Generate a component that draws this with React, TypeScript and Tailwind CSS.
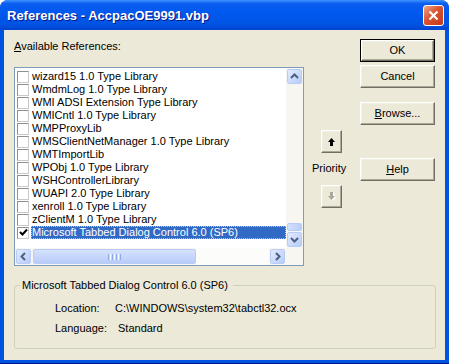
import React from "react";

const items = [
  "wizard15 1.0 Type Library",
  "WmdmLog 1.0 Type Library",
  "WMI ADSI Extension Type Library",
  "WMICntl 1.0 Type Library",
  "WMPProxyLib",
  "WMSClientNetManager 1.0 Type Library",
  "WMTImportLib",
  "WPObj 1.0 Type Library",
  "WSHControllerLibrary",
  "WUAPI 2.0 Type Library",
  "xenroll 1.0 Type Library",
  "zClientM 1.0 Type Library",
];

function Chevron({ dir }: { dir: "up" | "down" | "left" | "right" }) {
  const rot = { up: 0, right: 90, down: 180, left: 270 }[dir];
  return (
    <svg width="9" height="9" viewBox="0 0 9 9" style={{ transform: `rotate(${rot}deg)` }}>
      <path d="M1 6 L4.5 2.5 L8 6" fill="none" stroke="#4D6185" strokeWidth="2" />
    </svg>
  );
}

function ScrollBtn({ dir }: { dir: "up" | "down" | "left" | "right" }) {
  return (
    <div className="w-[17px] h-[17px] shrink-0 p-px">
      <div className="w-full h-full flex items-center justify-center rounded-[2px] border border-[#B9CCF7] bg-[linear-gradient(135deg,#E3EBFF,#B7CBF8)]">
        <Chevron dir={dir} />
      </div>
    </div>
  );
}

function Btn({
  children,
  def,
  className = "",
}: {
  children: React.ReactNode;
  def?: boolean;
  className?: string;
}) {
  const bevel =
    "flex-1 flex items-center justify-center border border-t-white border-l-white border-r-[#716F64] border-b-[#716F64] shadow-[inset_-1px_-1px_0_#ACA899,inset_1px_1px_0_#F1EFE2]";
  return (
    <div className={"flex bg-[#ECE9D8] " + (def ? "border border-black " : "") + className}>
      <div className={bevel}>{children}</div>
    </div>
  );
}

function CheckBox({ checked }: { checked?: boolean }) {
  return (
    <div className="w-[12px] h-[12px] shrink-0 ml-[2px] border border-t-[#8E8F8F] border-l-[#8E8F8F] border-r-[#C9C9C9] border-b-[#C9C9C9] bg-white flex items-center justify-center">
      {checked && (
        <svg width="9" height="9" viewBox="0 0 9 9">
          <path d="M1 4 L3.5 6.5 L8 1.5" fill="none" stroke="#000" strokeWidth="2" />
        </svg>
      )}
    </div>
  );
}

export default function App() {
  return (
    <div className="w-[449px] h-[364px] flex flex-col rounded-t-[8px] overflow-hidden bg-[#0053E1] border-b-[1px] border-[#00138C] font-['Liberation_Sans',Arial,sans-serif] text-[11px] leading-[13px] text-black">
      {/* title bar */}
      <div className="h-[30px] shrink-0 flex items-center pl-[7px] pr-[5px] bg-[linear-gradient(180deg,#3F93FF_0%,#0A5EF0_12%,#0058EE_45%,#0054E3_80%,#0045D0_100%)]">
        <span className="flex-1 text-white font-bold text-[13px] [text-shadow:1px_1px_#0A1883]">
          References - AccpacOE9991.vbp
        </span>
        <div className="w-[21px] h-[21px] rounded-[3px] border border-white bg-[linear-gradient(135deg,#F0A58A,#D9532E_45%,#C2391A)] flex items-center justify-center">
          <svg width="11" height="11" viewBox="0 0 11 11">
            <path d="M1.5 1.5 L9.5 9.5 M9.5 1.5 L1.5 9.5" stroke="#fff" strokeWidth="2.2" />
          </svg>
        </div>
      </div>

      {/* client */}
      <div className="flex-1 mx-[4px] mb-[3px] bg-[#ECE9D8] flex flex-col">
        <div className="flex">
          {/* left column */}
          <div className="ml-[10px] w-[290px] flex flex-col">
            <div className="mt-[10px] h-[13px]">
              <span className="underline">A</span>vailable References:
            </div>
            <div className="mt-[14px] h-[199px] border border-[#7F9DB9] bg-white flex flex-col">
              <div className="flex h-[180px]">
                <div className="w-[271px] pt-[2px] flex flex-col">
                  {items.map((t) => (
                    <div key={t} className="h-[13px] flex items-center">
                      <CheckBox />
                      <span className="ml-[2px] pl-[1px] whitespace-nowrap">{t}</span>
                    </div>
                  ))}
                  <div className="h-[13px] flex items-center">
                    <CheckBox checked />
                    <span className="ml-[2px] pl-[1px] flex-1 h-[13px] bg-[#316AC5] text-white whitespace-nowrap outline-1 outline-dotted outline-[#E8C46A] -outline-offset-1">
                      Microsoft Tabbed Dialog Control 6.0 (SP6)
                    </span>
                  </div>
                </div>
                {/* vertical scrollbar */}
                <div className="w-[17px] flex flex-col bg-[#F7F6F1]">
                  <ScrollBtn dir="up" />
                  <div className="flex-1" />
                  <div className="h-[8px] mx-px rounded-[2px] border border-[#B9CCF7] bg-[linear-gradient(90deg,#D3E0FE,#B9CDF8)]" />
                  <ScrollBtn dir="down" />
                </div>
              </div>
              {/* horizontal scrollbar */}
              <div className="flex h-[17px]">
                <div className="w-[271px] flex bg-[#F7F6F1]">
                  <ScrollBtn dir="left" />
                  <div className="w-[163px] my-px ml-px rounded-[2px] border border-[#B9CCF7] bg-[linear-gradient(180deg,#D6E2FE,#B8CCF8)] flex items-center justify-center gap-[1px]">
                    <div className="w-px h-[6px] bg-[#8CA9EE]" />
                    <div className="w-px h-[6px] bg-white" />
                    <div className="w-px h-[6px] bg-[#8CA9EE]" />
                    <div className="w-px h-[6px] bg-white" />
                    <div className="w-px h-[6px] bg-[#8CA9EE]" />
                    <div className="w-px h-[6px] bg-white" />
                    <div className="w-px h-[6px] bg-[#8CA9EE]" />
                  </div>
                  <div className="flex-1 bg-[#FCFCFA]" />
                  <ScrollBtn dir="right" />
                </div>
                <div className="w-[17px] bg-[#F7F6F1]" />
              </div>
            </div>
          </div>

          {/* priority column */}
          <div className="ml-[8px] w-[34px] flex flex-col">
            <Btn className="mt-[100px] ml-[9px] w-[21px] h-[23px]">
              <svg width="7" height="8" viewBox="0 0 7 8">
                <path d="M3.5 0 L7 4 L5 4 L5 8 L2 8 L2 4 L0 4 Z" fill="#000" />
              </svg>
            </Btn>
            <div className="mt-[9px] h-[13px]">Priority</div>
            <Btn className="mt-[10px] ml-[9px] w-[21px] h-[23px]">
              <svg width="8" height="9" viewBox="0 0 8 9">
                <path d="M4 8 L7.5 4 L5.5 4 L5.5 0 L2.5 0 L2.5 4 L0.5 4 Z" fill="#fff" transform="translate(1 1)" />
                <path d="M3.5 8 L7 4 L5 4 L5 0 L2 0 L2 4 L0 4 Z" fill="#ACA899" />
              </svg>
            </Btn>
          </div>

          {/* buttons column */}
          <div className="ml-[14px] w-[75px] flex flex-col">
            <Btn def className="mt-[9px] h-[23px]">OK</Btn>
            <Btn className="mt-[3px] h-[23px]">Cancel</Btn>
            <Btn className="mt-[14px] h-[23px]">
              <span>
                <span className="underline">B</span>rowse...
              </span>
            </Btn>
            <Btn className="mt-[33px] h-[23px]">
              <span>
                <span className="underline">H</span>elp
              </span>
            </Btn>
          </div>
        </div>

        {/* group box */}
        <fieldset className="mt-[13px] ml-[10px] w-[422px] border border-[#D0D0BF] rounded-[3px] pb-[13px]">
          <legend className="ml-[5px] pl-[2px] pr-[5px] leading-[13px]">
            Microsoft Tabbed Dialog Control 6.0 (SP6)
          </legend>
          <div className="mt-[10px] pl-[40px] flex h-[13px]">
            <span className="w-[60px]">Location:</span>
            <span>C:\WINDOWS\system32\tabctl32.ocx</span>
          </div>
          <div className="mt-[7px] pl-[40px] flex h-[13px]">
            <span className="w-[63px]">Language:</span>
            <span>Standard</span>
          </div>
        </fieldset>
      </div>
    </div>
  );
}
